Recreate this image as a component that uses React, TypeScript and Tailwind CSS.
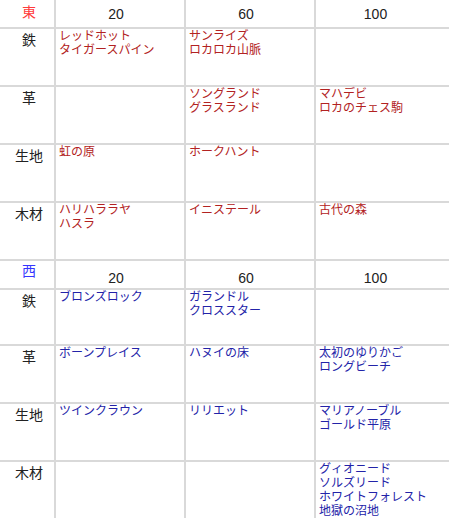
import React from "react";

type Row = [string, string[], string[], string[]];

const sections: {
  head: string;
  headClass: string;
  itemClass: string;
  numClass: string;
  rows: Row[];
}[] = [
  {
    head: "東",
    headClass: "text-[#ff3b3b] pb-[3px]",
    itemClass: "text-[#b22222]",
    numClass: "pt-[1px]",
    rows: [
      ["鉄", ["レッドホット", "タイガースパイン"], ["サンライズ", "ロカロカ山脈"], []],
      ["革", [], ["ソングランド", "グラスランド"], ["マハデビ", "ロカのチェス駒"]],
      ["生地", ["虹の原"], ["ホークハント"], []],
      ["木材", ["ハリハララヤ", "ハスラ"], ["イニステール"], ["古代の森"]],
    ],
  },
  {
    head: "西",
    headClass: "text-[#3535ff] pb-[6px]",
    itemClass: "text-[#2323a8]",
    numClass: "pt-[8px]",
    rows: [
      ["鉄", ["ブロンズロック"], ["ガランドル", "クロススター"], []],
      ["革", ["ボーンプレイス"], ["ハヌイの床"], ["太初のゆりかご", "ロングビーチ"]],
      ["生地", ["ツインクラウン"], ["リリエット"], ["マリアノーブル", "ゴールド平原"]],
      ["木材", [], [], ["グィオニード", "ソルズリード", "ホワイトフォレスト", "地獄の沼地"]],
    ],
  },
];

const levels = ["20", "60", "100"];

export default function App() {
  return (
    <div
      className="w-[449px] bg-white text-[#222]"
      style={{ fontFamily: '"Liberation Sans", "Noto Sans CJK JP", sans-serif' }}
    >
      <div className="grid grid-cols-[54px_128px_128px_1fr] gap-[2px] bg-[#d9d9d9]">
        {sections.map((s, si) => (
          <React.Fragment key={s.head}>
            <div className={`bg-white h-[27px] flex items-center justify-center pl-[4px] text-[14px] ${s.headClass}`}>
              {s.head}
            </div>
            {levels.map((lv, i) => (
              <div
                key={lv}
                className={`bg-white h-[27px] flex items-center justify-center text-[14px] ${s.numClass} ${i === 2 ? "pr-[14px]" : "pr-[8px]"}`}
              >
                {lv}
              </div>
            ))}
            {s.rows.map(([label, ...cells], ri) => {
              const h = si === 1 && ri === 0 ? "min-h-[54px]" : "min-h-[56px]";
              return (
                <React.Fragment key={label}>
                  <div className={`bg-white ${h} pl-[4px] pt-[2px] text-center text-[14px] leading-[18px]`}>
                    {label}
                  </div>
                  {cells.map((items, j) => (
                    <div
                      key={j}
                      className={`bg-white ${h} pl-[3px] text-[12px] leading-[14px] ${s.itemClass}`}
                    >
                      {items.map((t) => (
                        <div key={t}>{t}</div>
                      ))}
                    </div>
                  ))}
                </React.Fragment>
              );
            })}
          </React.Fragment>
        ))}
      </div>
    </div>
  );
}
